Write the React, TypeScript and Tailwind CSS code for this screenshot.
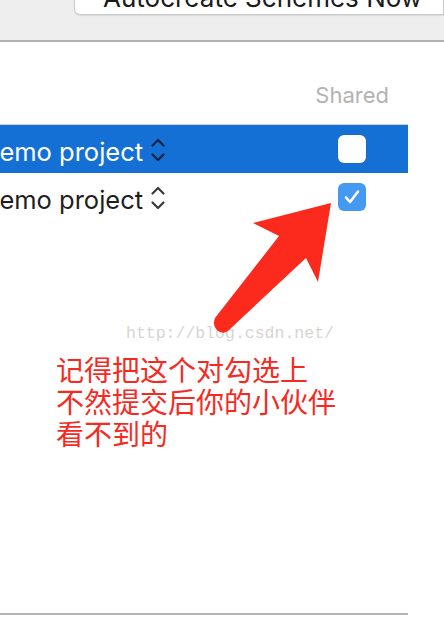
import React from "react";

const sans = { fontFamily: "Inter, Roboto, 'Noto Sans', sans-serif" };

function UpDown({ color }: { color: string }) {
  return (
    <svg width="16" height="26" viewBox="0 0 16 26" fill="none" stroke={color} strokeWidth="2.2" strokeLinecap="round" strokeLinejoin="round">
      <path d="M2.5 8.5 8 3l5.5 5.5" />
      <path d="M2.5 17.5 8 23l5.5-5.5" />
    </svg>
  );
}

function ProjectRow({ selected, checked }: { selected: boolean; checked: boolean }) {
  return (
    <div
      className={
        "flex h-[48px] items-center justify-between pr-[42px] " +
        (selected ? "bg-[#1570d6] text-white" : "bg-white text-[#1e1e1e]")
      }
    >
      <div className="flex items-center pt-[6px]">
        <span className="ml-[-19px] text-[25.5px] leading-none" style={sans}>
          Demo project
        </span>
        <span className="ml-[7px] mt-[-4px]">
          <UpDown color={selected ? "#0d2240" : "#3a3a3a"} />
        </span>
      </div>
      {checked ? (
        <div className="flex h-[28px] w-[28px] items-center justify-center rounded-[6px] bg-[#4499f2]">
          <svg width="18" height="18" viewBox="0 0 18 18" fill="none" stroke="white" strokeWidth="2.6" strokeLinecap="round" strokeLinejoin="round">
            <path d="M3 9.5 7 14 15 3.5" />
          </svg>
        </div>
      ) : (
        <div className="h-[28px] w-[28px] rounded-[6px] bg-white shadow-[0_0_1px_rgba(0,0,0,0.4)]" />
      )}
    </div>
  );
}

export default function App() {
  return (
    <div className="relative h-[644px] w-[444px] overflow-hidden bg-white">
      <div className="h-[42px] border-b-2 border-[#b0b0b0] bg-[#eeeeee] pl-[74px]">
        <div className="h-[15px] overflow-hidden rounded-bl-[6px] border border-t-0 border-[#c9c9c9] bg-white shadow-[0_1px_1px_rgba(0,0,0,0.08)]">
          <div className="mt-[-17px] pl-[28px] text-[26px] leading-[30px] text-[#1a1a1a]" style={sans}>
            Autocreate Schemes Now
          </div>
        </div>
      </div>

      <div className="w-[408px]">
        <div className="flex h-[82px] items-center justify-end pr-[19px] pt-[24px]">
          <span className="text-[22px] text-[#b3b3b3]" style={sans}>
            Shared
          </span>
        </div>
        <div className="border-t border-[#cfcfcf]">
          <ProjectRow selected checked={false} />
          <ProjectRow selected={false} checked />
        </div>
      </div>

      <div
        className="ml-[126px] mt-[103px] text-[16.5px] leading-[20px] text-[#d6d6d2]"
        style={{ fontFamily: "'Liberation Mono', monospace" }}
      >
        http://blog.csdn.net/
      </div>

      <div
        className="ml-[56px] mt-[9px] text-[28px] leading-[32px] text-[#f62a1f]"
        style={{ fontFamily: "'Noto Sans CJK SC', sans-serif" }}
      >
        <div>记得把这个对勾选上</div>
        <div>不然提交后你的小伙伴</div>
        <div>看不到的</div>
      </div>

      <div className="mt-[164px] h-[2px] w-[408px] bg-[#b3b3b3]" />

      <svg className="absolute left-0 top-0" width="444" height="644" viewBox="0 0 444 644">
        <path
          d="M331 203 L253 223 L279 236 L215 318 Q212 326 218 331 Q224 335 229 330 L306 258 L318 282 Z"
          fill="#fb2a1c"
        />
      </svg>
    </div>
  );
}
